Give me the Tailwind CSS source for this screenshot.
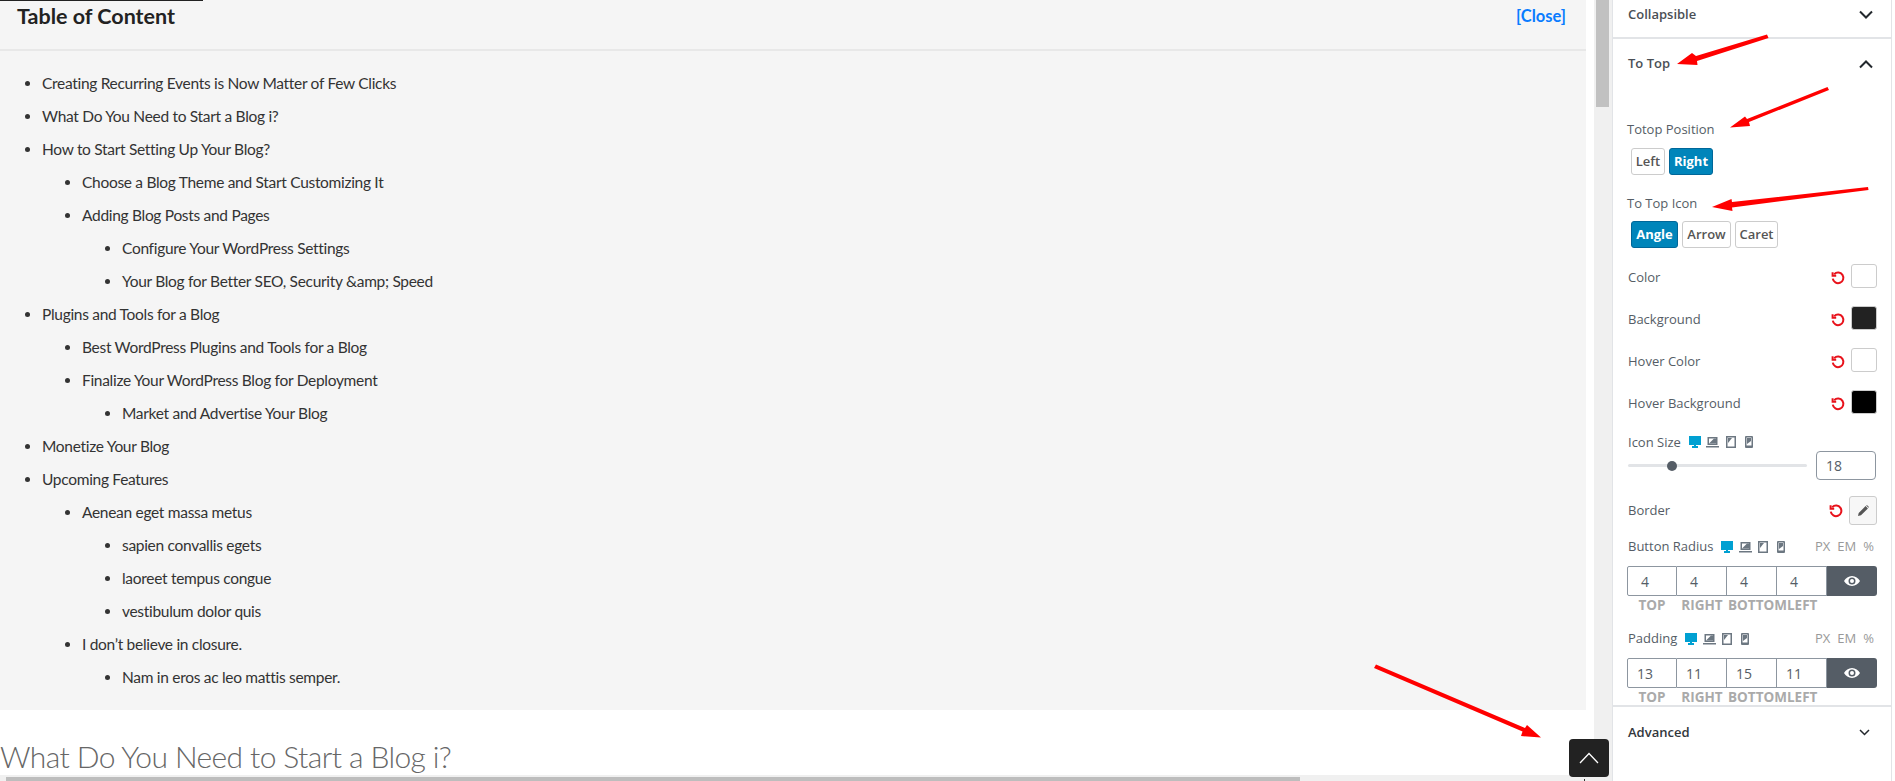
<!DOCTYPE html>
<html lang="en">
  <head>
    <meta charset="utf-8" />
    <script src="https://cdn.jsdelivr.net/npm/@tailwindcss/browser@4"></script>
    <title>To Top settings</title>
  </head>
  <body class="bg-white">
    <div class="relative flex w-[1895px] h-[781px] overflow-hidden bg-white">
      <!-- page content -->
      <main class="w-[1594px] h-full flex flex-col font-['Lato',sans-serif] text-[#333]">
        <div class="flex-1 min-h-0">
          <section class="w-[1586px] h-[710px] bg-[#f5f5f5]">
            <div class="relative h-[51px] flex justify-between pl-[17px] pr-[20px] border-b-2 border-[#e8e8e8]">
              <div class="absolute left-0 top-0 w-[203px] h-px bg-[#222]"></div>
              <span class="text-[21.5px] leading-[32px] font-bold text-[#222]">Table of Content</span>
              <a class="text-[16.5px] leading-[32px] font-bold text-[#0a7cff]">[Close]</a>
            </div>
            <ul class="list-disc pl-[42px] pt-[16px] text-[15.5px] leading-[33px] tracking-[-0.3px]">
              <li>Creating Recurring Events is Now Matter of Few Clicks</li>
              <li>What Do You Need to Start a Blog i?</li>
              <li>How to Start Setting Up Your Blog?
                <ul class="list-disc pl-[40px]">
                  <li>Choose a Blog Theme and Start Customizing It</li>
                  <li>Adding Blog Posts and Pages
                    <ul class="list-disc pl-[40px]">
                      <li>Configure Your WordPress Settings</li>
                      <li>Your Blog for Better SEO, Security &amp;amp; Speed</li>
                    </ul>
                  </li>
                </ul>
              </li>
              <li>Plugins and Tools for a Blog
                <ul class="list-disc pl-[40px]">
                  <li>Best WordPress Plugins and Tools for a Blog</li>
                  <li>Finalize Your WordPress Blog for Deployment
                    <ul class="list-disc pl-[40px]">
                      <li>Market and Advertise Your Blog</li>
                    </ul>
                  </li>
                </ul>
              </li>
              <li>Monetize Your Blog</li>
              <li>Upcoming Features
                <ul class="list-disc pl-[40px]">
                  <li>Aenean eget massa metus
                    <ul class="list-disc pl-[40px]">
                      <li>sapien convallis egets</li>
                      <li>laoreet tempus congue</li>
                      <li>vestibulum dolor quis</li>
                    </ul>
                  </li>
                  <li>I don’t believe in closure.
                    <ul class="list-disc pl-[40px]">
                      <li>Nam in eros ac leo mattis semper.</li>
                    </ul>
                  </li>
                </ul>
              </li>
            </ul>
          </section>
          <h2 class="mt-[26px] text-[30px] leading-[40px] font-light tracking-[-0.6px] text-[#666]">What Do You Need to Start a Blog i?</h2>
        </div>
        <div class="h-[6px] bg-[#f0f0f0] pt-[2px] pl-[6px]">
          <div class="w-[1294px] h-[4px] bg-[#bdbdbd]"></div>
        </div>
      </main>

      <!-- vertical scrollbar -->
      <div class="w-[18px] h-full bg-[#f0f0f0] pl-[2px]">
        <div class="w-[13px] h-[107px] bg-[#c1c1c1]"></div>
      </div>

      <!-- settings panel -->
      <aside class="w-[280px] h-full border-l border-[#e2e4e7] border-r font-['Open_Sans',sans-serif] text-[13px] text-[#555d66]">
        <div class="h-[39px] pb-[8px] pl-[15px] pr-[18px] flex items-center justify-between border-b-2 border-[#e2e4e7] font-semibold text-[#4a4f55]">
          <span>Collapsible</span>
          <svg width="14" height="9" viewBox="0 0 14 9" fill="none" stroke="#23282d" stroke-width="2"><path d="M1 1.500l6 6 6-6" /></svg>
        </div>
        <div class="h-[48px] pt-[2px] pl-[15px] pr-[18px] flex items-center justify-between font-semibold text-[#4a4f55]">
          <span>To Top</span>
          <svg width="14" height="9" viewBox="0 0 14 9" fill="none" stroke="#23282d" stroke-width="2"><path d="M1 7.500l6-6 6 6" /></svg>
        </div>

        <div class="pl-[14px] pr-[14px]">
          <div class="mt-[30px] h-6 pt-[2px] flex items-center">Totop Position</div>
          <div class="mt-[7px] ml-[4px] flex gap-[4px] h-[27px] font-semibold">
            <span class="w-[34px] flex items-center justify-center rounded-[3px] border border-[#ccc] text-[#555]">Left</span>
            <span class="w-[44px] flex items-center justify-center rounded-[3px] border border-[#006799] bg-[#0085ba] text-white font-bold">Right</span>
          </div>
          <div class="mt-[16px] h-6 pt-[2px] flex items-center">To Top Icon</div>
          <div class="mt-[6px] ml-[4px] flex gap-[4px] h-[27px] font-semibold">
            <span class="w-[47px] flex items-center justify-center rounded-[3px] border border-[#006799] bg-[#0085ba] text-white font-bold">Angle</span>
            <span class="w-[49px] flex items-center justify-center rounded-[3px] border border-[#ccc] text-[#555]">Arrow</span>
            <span class="w-[43px] flex items-center justify-center rounded-[3px] border border-[#ccc] text-[#555]">Caret</span>
          </div>

          <div class="mt-[16px] h-6 flex items-center justify-between pl-px">
            <span class="mt-[4px]">Color</span>
            <span class="flex items-center gap-[6px]">
              <svg class="mt-[3px]" width="14" height="14" viewBox="0 0 14 14" fill="none" stroke="#e8121b" stroke-width="2"><path d="M3.200 3.200A5.300 5.300 0 1 1 1.800 7.600" /><path d="M1.600 1.200v3.600h3.600" /></svg>
              <span class="w-[26px] h-6 rounded-[3px] border border-[#ccc] bg-white"></span>
            </span>
          </div>
          <div class="mt-[18px] h-6 flex items-center justify-between pl-px">
            <span class="mt-[4px]">Background</span>
            <span class="flex items-center gap-[6px]">
              <svg class="mt-[3px]" width="14" height="14" viewBox="0 0 14 14" fill="none" stroke="#e8121b" stroke-width="2"><path d="M3.200 3.200A5.300 5.300 0 1 1 1.800 7.600" /><path d="M1.600 1.200v3.600h3.600" /></svg>
              <span class="w-[26px] h-6 rounded-[3px] border border-[#ccc] bg-[#222]"></span>
            </span>
          </div>
          <div class="mt-[18px] h-6 flex items-center justify-between pl-px">
            <span class="mt-[4px]">Hover Color</span>
            <span class="flex items-center gap-[6px]">
              <svg class="mt-[3px]" width="14" height="14" viewBox="0 0 14 14" fill="none" stroke="#e8121b" stroke-width="2"><path d="M3.200 3.200A5.300 5.300 0 1 1 1.800 7.600" /><path d="M1.600 1.200v3.600h3.600" /></svg>
              <span class="w-[26px] h-6 rounded-[3px] border border-[#ccc] bg-white"></span>
            </span>
          </div>
          <div class="mt-[18px] h-6 flex items-center justify-between pl-px">
            <span class="mt-[4px]">Hover Background</span>
            <span class="flex items-center gap-[6px]">
              <svg class="mt-[3px]" width="14" height="14" viewBox="0 0 14 14" fill="none" stroke="#e8121b" stroke-width="2"><path d="M3.200 3.200A5.300 5.300 0 1 1 1.800 7.600" /><path d="M1.600 1.200v3.600h3.600" /></svg>
              <span class="w-[26px] h-6 rounded-[3px] border border-[#ccc] bg-black"></span>
            </span>
          </div>

          <div class="mt-[18px] h-5 flex items-center pl-px gap-[4px]">
            <span class="mt-[2px] mr-[1px]">Icon Size</span>
            <span class="flex items-center">
              <span class="w-[18px] flex justify-center"><svg width="12" height="12" viewBox="0 0 12 12" fill="#00a0d2"><path d="M0 0h12v9H7v1h2v2H3v-2h2V9H0z" /></svg></span>
              <span class="w-[18px] flex justify-center"><svg width="13" height="12" viewBox="0 0 13 12" fill="#6c7781"><path d="M1.500 1h10v8h-10zM3 2.500v5h7v-5zM0 10h13v1.500H0z" /><path d="M3 7.500L8 2.500h2v5z" /></svg></span>
              <span class="w-[18px] flex justify-center"><svg width="10" height="12" viewBox="0 0 10 12" fill="#6c7781"><path d="M0 0h10v12H0zm1.500 1.500v9h7v-9z" /><path d="M2 2h4L2 7z" /></svg></span>
              <span class="w-[18px] flex justify-center"><svg width="8" height="12" viewBox="0 0 8 12" fill="#6c7781"><path d="M0 1a1 1 0 0 1 1-1h6a1 1 0 0 1 1 1v10a1 1 0 0 1-1 1H1a1 1 0 0 1-1-1zm1.500.500v8h5v-8z" /><path d="M2 2h4v3L2 8z" /></svg></span>
            </span>
          </div>
          <div class="-mt-px h-[29px] flex items-center pl-px gap-[9px]">
            <div class="relative w-[179px] h-[3px] rounded-full bg-[#e2e4e7]">
              <span class="absolute left-[39px] -top-[3.500px] w-[10px] h-[10px] rounded-full bg-[#555d66]"></span>
            </div>
            <span class="w-[60px] h-[29px] flex items-center pl-[9px] rounded-[4px] border border-[#8d96a0] text-[14px]">18</span>
          </div>

          <div class="mt-[16px] h-[29px] flex items-center justify-between pl-px">
            <span>Border</span>
            <span class="flex items-center gap-[6px]">
              <svg width="14" height="14" viewBox="0 0 14 14" fill="none" stroke="#e8121b" stroke-width="2"><path d="M3.200 3.200A5.300 5.300 0 1 1 1.800 7.600" /><path d="M1.600 1.200v3.600h3.600" /></svg>
              <span class="w-[28px] h-[29px] flex items-center justify-center rounded-[3px] border border-[#ccc] bg-[#f7f7f7]">
                <svg width="11" height="11" viewBox="0 0 11 11" fill="#555"><path d="M0 11l.7-3L7.600 1.100l2.300 2.300L3 10.300zM8.200.5l.7-.5 2.100 2.100-.5.700z" /></svg>
              </span>
            </span>
          </div>

          <div class="mt-[12px] h-5 flex items-center justify-between pl-px pr-[3px]">
            <span class="flex items-center gap-[4px]">
              <span class="mr-[1px]">Button Radius</span>
              <span class="flex items-center">
                <span class="w-[18px] flex justify-center"><svg width="12" height="12" viewBox="0 0 12 12" fill="#00a0d2"><path d="M0 0h12v9H7v1h2v2H3v-2h2V9H0z" /></svg></span>
                <span class="w-[18px] flex justify-center"><svg width="13" height="12" viewBox="0 0 13 12" fill="#6c7781"><path d="M1.500 1h10v8h-10zM3 2.500v5h7v-5zM0 10h13v1.500H0z" /><path d="M3 7.500L8 2.500h2v5z" /></svg></span>
                <span class="w-[18px] flex justify-center"><svg width="10" height="12" viewBox="0 0 10 12" fill="#6c7781"><path d="M0 0h10v12H0zm1.500 1.500v9h7v-9z" /><path d="M2 2h4L2 7z" /></svg></span>
                <span class="w-[18px] flex justify-center"><svg width="8" height="12" viewBox="0 0 8 12" fill="#6c7781"><path d="M0 1a1 1 0 0 1 1-1h6a1 1 0 0 1 1 1v10a1 1 0 0 1-1 1H1a1 1 0 0 1-1-1zm1.500.500v8h5v-8z" /><path d="M2 2h4v3L2 8z" /></svg></span>
              </span>
            </span>
            <span class="flex gap-[7px] text-[#999]"><span>PX</span><span>EM</span><span>%</span></span>
          </div>
          <div class="mt-[9px] h-[30px] flex text-[14px]">
            <span class="w-[50px] border border-[#8d96a0] rounded-l-[2px] flex items-center"><span class="w-[34px] text-center">4</span></span>
            <span class="w-[50px] border border-l-0 border-[#8d96a0] flex items-center"><span class="w-[34px] text-center">4</span></span>
            <span class="w-[50px] border border-l-0 border-[#8d96a0] flex items-center"><span class="w-[34px] text-center">4</span></span>
            <span class="w-[50px] border border-l-0 border-[#8d96a0] flex items-center"><span class="w-[34px] text-center">4</span></span>
            <span class="w-[50px] rounded-r-[3px] bg-[#555d66] flex items-center justify-center">
              <svg width="16" height="10" viewBox="0 0 16 10" fill="white"><path d="M8 0c3.500 0 6.300 2.200 8 5-1.700 2.800-4.500 5-8 5S1.700 7.800 0 5c1.700-2.800 4.500-5 8-5zm0 1.500a3.500 3.500 0 1 0 0 7 3.500 3.500 0 0 0 0-7zM8 3a2 2 0 1 1 0 4 2 2 0 0 1 0-4z" /></svg>
            </span>
          </div>
          <div class="h-[18px] flex text-[13.5px] font-bold text-[#aaa] leading-[18px] whitespace-nowrap">
            <span class="w-[50px] text-center">TOP</span><span class="w-[50px] text-center">RIGHT</span><span class="ml-px">BOTTOM</span><span>LEFT</span>
          </div>

          <div class="mt-[15px] h-5 flex items-center justify-between pl-px pr-[3px]">
            <span class="flex items-center gap-[4px]">
              <span class="mr-[1px]">Padding</span>
              <span class="flex items-center">
                <span class="w-[18px] flex justify-center"><svg width="12" height="12" viewBox="0 0 12 12" fill="#00a0d2"><path d="M0 0h12v9H7v1h2v2H3v-2h2V9H0z" /></svg></span>
                <span class="w-[18px] flex justify-center"><svg width="13" height="12" viewBox="0 0 13 12" fill="#6c7781"><path d="M1.500 1h10v8h-10zM3 2.500v5h7v-5zM0 10h13v1.500H0z" /><path d="M3 7.500L8 2.500h2v5z" /></svg></span>
                <span class="w-[18px] flex justify-center"><svg width="10" height="12" viewBox="0 0 10 12" fill="#6c7781"><path d="M0 0h10v12H0zm1.500 1.500v9h7v-9z" /><path d="M2 2h4L2 7z" /></svg></span>
                <span class="w-[18px] flex justify-center"><svg width="8" height="12" viewBox="0 0 8 12" fill="#6c7781"><path d="M0 1a1 1 0 0 1 1-1h6a1 1 0 0 1 1 1v10a1 1 0 0 1-1 1H1a1 1 0 0 1-1-1zm1.500.500v8h5v-8z" /><path d="M2 2h4v3L2 8z" /></svg></span>
              </span>
            </span>
            <span class="flex gap-[7px] text-[#999]"><span>PX</span><span>EM</span><span>%</span></span>
          </div>
          <div class="mt-[9px] h-[30px] flex text-[14px]">
            <span class="w-[50px] border border-[#8d96a0] rounded-l-[2px] flex items-center"><span class="w-[34px] text-center">13</span></span>
            <span class="w-[50px] border border-l-0 border-[#8d96a0] flex items-center"><span class="w-[34px] text-center">11</span></span>
            <span class="w-[50px] border border-l-0 border-[#8d96a0] flex items-center"><span class="w-[34px] text-center">15</span></span>
            <span class="w-[50px] border border-l-0 border-[#8d96a0] flex items-center"><span class="w-[34px] text-center">11</span></span>
            <span class="w-[50px] rounded-r-[3px] bg-[#555d66] flex items-center justify-center">
              <svg width="16" height="10" viewBox="0 0 16 10" fill="white"><path d="M8 0c3.500 0 6.300 2.200 8 5-1.700 2.800-4.500 5-8 5S1.700 7.800 0 5c1.700-2.800 4.500-5 8-5zm0 1.500a3.500 3.500 0 1 0 0 7 3.500 3.500 0 0 0 0-7zM8 3a2 2 0 1 1 0 4 2 2 0 0 1 0-4z" /></svg>
            </span>
          </div>
          <div class="h-[17px] flex text-[13.5px] font-bold text-[#aaa] leading-[18px] whitespace-nowrap">
            <span class="w-[50px] text-center">TOP</span><span class="w-[50px] text-center">RIGHT</span><span class="ml-px">BOTTOM</span><span>LEFT</span>
          </div>
        </div>

        <div class="h-[55px] pb-[2px] border-t-2 border-[#e2e4e7] pl-[15px] pr-[21px] flex items-center justify-between font-semibold text-[#32373c]">
          <span>Advanced</span>
          <svg width="11" height="7" viewBox="0 0 11 7" fill="none" stroke="#23282d" stroke-width="1.500"><path d="M1 1l4.500 4.500L10 1" /></svg>
        </div>
      </aside>

      <!-- to top button, floats over the page -->
      <a class="absolute left-[1569px] top-[739px] w-[40px] h-[38px] rounded-[4px] bg-[#222] flex items-center justify-center">
        <svg width="20" height="12" viewBox="0 0 20 12" fill="none" stroke="white" stroke-width="1.300"><path d="M1 11l9-9.500 9 9.500" /></svg>
      </a>
      <span class="absolute left-[1584px] top-[779px] w-px h-[2px] bg-[#333]"></span>

      <!-- red annotation arrows -->
      <svg class="absolute inset-0 pointer-events-none" width="1895" height="781" viewBox="0 0 1895 781" fill="#f00">
        <path d="M1767 34.500l1.500 3.500L1697 61l.5 4L1677 64l15-11 4 3z" />
        <path d="M1827.500 87l1.500 3L1749 122l1 4-20 1.500 15-11 2 2.500z" />
        <path d="M1868 187l.5 3L1732 207.500l.5 3.500-20.500-4 19.500-8 .5 3z" />
        <path d="M1376 664.500l-2 3.500 148.500 63.500-1.500 4.500 20 1.500-14-12.500-2 3z" />
      </svg>
    </div>
  </body>
</html>
